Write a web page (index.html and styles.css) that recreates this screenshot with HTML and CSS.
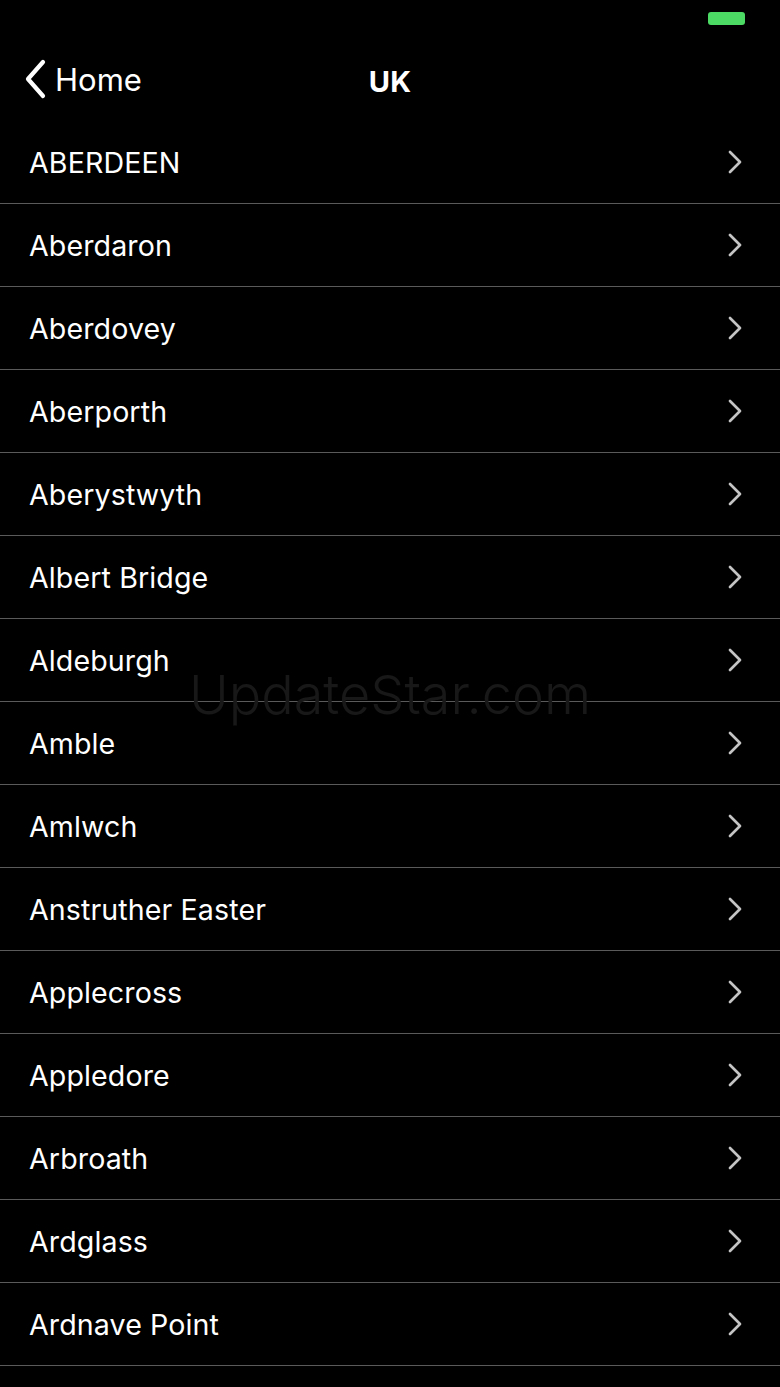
FILE: index.html
```html
<!DOCTYPE html>
<html lang="en">
<head>
    <meta charset="UTF-8">
    <meta name="viewport" content="width=device-width, initial-scale=1.0">
    <title>UK</title>
    <link rel="stylesheet" href="styles.css">
</head>
<body>

    <div class="status-bar">
        <span class="battery"></span>
    </div>

    <header class="nav-bar">
        <a class="back" href="#">
            <svg class="back-icon" width="24" height="40" viewBox="0 0 24 40">
                <path d="M20 3 L5 20 L20 37" fill="none" stroke="#fff" stroke-width="4.2" stroke-linecap="round" stroke-linejoin="round"/>
            </svg>
            <span>Home</span>
        </a>
        <h1>UK</h1>
    </header>

    <ul class="list">
        <li><span>ABERDEEN</span><svg class="chevron" viewBox="0 0 16 24"><path d="M3 2 L13 12 L3 22" /></svg></li>
        <li><span>Aberdaron</span><svg class="chevron" viewBox="0 0 16 24"><path d="M3 2 L13 12 L3 22" /></svg></li>
        <li><span>Aberdovey</span><svg class="chevron" viewBox="0 0 16 24"><path d="M3 2 L13 12 L3 22" /></svg></li>
        <li><span>Aberporth</span><svg class="chevron" viewBox="0 0 16 24"><path d="M3 2 L13 12 L3 22" /></svg></li>
        <li><span>Aberystwyth</span><svg class="chevron" viewBox="0 0 16 24"><path d="M3 2 L13 12 L3 22" /></svg></li>
        <li><span>Albert Bridge</span><svg class="chevron" viewBox="0 0 16 24"><path d="M3 2 L13 12 L3 22" /></svg></li>
        <li><span>Aldeburgh</span><svg class="chevron" viewBox="0 0 16 24"><path d="M3 2 L13 12 L3 22" /></svg></li>
        <li><span>Amble</span><svg class="chevron" viewBox="0 0 16 24"><path d="M3 2 L13 12 L3 22" /></svg></li>
        <li><span>Amlwch</span><svg class="chevron" viewBox="0 0 16 24"><path d="M3 2 L13 12 L3 22" /></svg></li>
        <li><span>Anstruther Easter</span><svg class="chevron" viewBox="0 0 16 24"><path d="M3 2 L13 12 L3 22" /></svg></li>
        <li><span>Applecross</span><svg class="chevron" viewBox="0 0 16 24"><path d="M3 2 L13 12 L3 22" /></svg></li>
        <li><span>Appledore</span><svg class="chevron" viewBox="0 0 16 24"><path d="M3 2 L13 12 L3 22" /></svg></li>
        <li><span>Arbroath</span><svg class="chevron" viewBox="0 0 16 24"><path d="M3 2 L13 12 L3 22" /></svg></li>
        <li><span>Ardglass</span><svg class="chevron" viewBox="0 0 16 24"><path d="M3 2 L13 12 L3 22" /></svg></li>
        <li><span>Ardnave Point</span><svg class="chevron" viewBox="0 0 16 24"><path d="M3 2 L13 12 L3 22" /></svg></li>
        <li><span></span></li>
    </ul>

    <!-- watermark over the list -->
    <div class="watermark">UpdateStar.com</div>

</body>
</html>
```

FILE: styles.css
```css
body {
    font-family: 'Inter', 'Noto Sans', sans-serif;
    margin: 0;
    padding: 0;
    background-color: #000;
    color: #fff;
    height: 1387px;
    overflow: hidden;
    position: relative;
}

/* Status bar */
.status-bar {
    height: 41px;
    display: flex;
    justify-content: flex-end;
    align-items: flex-start;
    padding-right: 35px;
}
.battery {
    display: block;
    width: 37px;
    height: 13px;
    margin-top: 12px;
    background-color: #4cd964;
    border-radius: 3px;
}

/* Nav bar */
.nav-bar {
    height: 80px;
    display: flex;
    align-items: center;
    justify-content: center;
    position: relative;
}
.nav-bar h1 {
    margin: 0;
    font-size: 29px;
    font-weight: 700;
    letter-spacing: 0.2px;
}
.back {
    position: absolute;
    left: 23px;
    top: 18px;
    display: flex;
    align-items: center;
    gap: 8px;
    color: #fff;
    text-decoration: none;
    font-size: 31px;
    font-weight: 400;
}
.back-icon {
    display: block;
}

/* List */
.list {
    list-style-type: none;
    margin: 0;
    padding: 0;
}
.list li {
    height: 82px;
    border-bottom: 1px solid #5a5a5a;
    display: flex;
    align-items: center;
    justify-content: space-between;
    padding: 0 37px 0 29px;
    font-size: 28.6px;
    font-weight: 400;
    letter-spacing: 0.1px;
}
.chevron {
    width: 16px;
    height: 24px;
    fill: none;
    stroke: #c4c4c4;
    stroke-width: 2.7;
    stroke-linecap: round;
    stroke-linejoin: round;
}

.watermark {
    position: absolute;
    top: 662px;
    left: 0;
    width: 100%;
    text-align: center;
    font-size: 54px;
    font-weight: 300;
    color: #181818;
    pointer-events: none;
}
```
